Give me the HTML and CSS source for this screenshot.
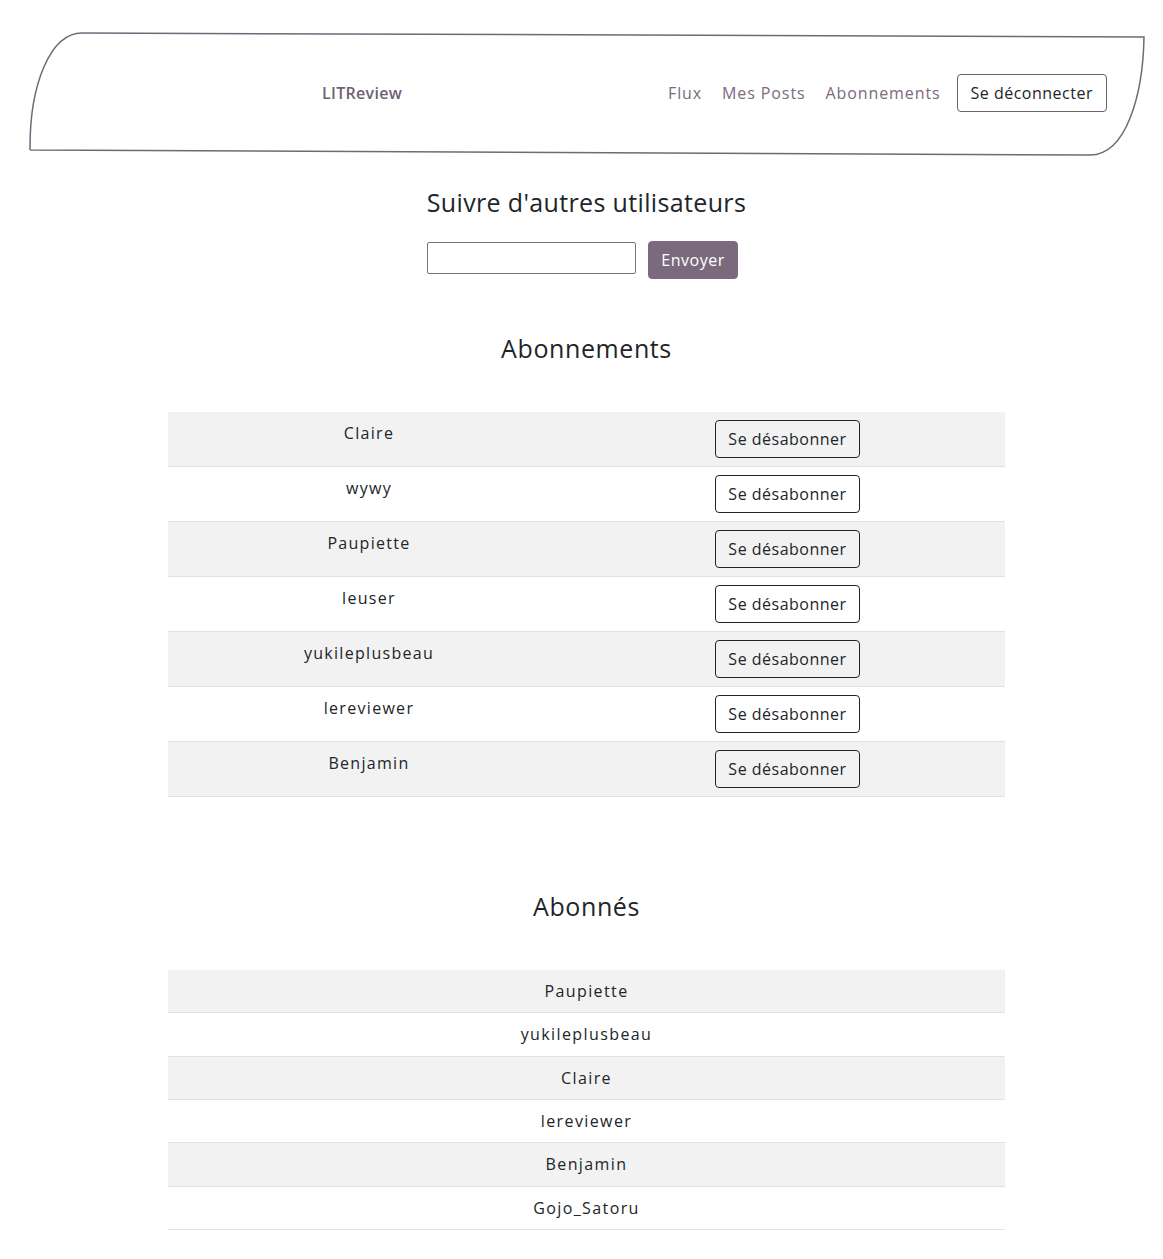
FILE: index.html
```html
<!DOCTYPE html>
<html lang="fr">
<head>
<meta charset="utf-8">
<title>LITReview - Abonnements</title>
<link rel="stylesheet" href="styles.css">
</head>
<body>
<header class="site-header">
  <svg class="header-frame" width="1114" height="122" viewBox="0 0 1114 122" aria-hidden="true">
    <path d="M0 117 L0 114 C0 52 20 0 52 0 L1114 4 C1113 60 1097 122 1060 122 L0 117" fill="none" stroke="#76667a" stroke-width="1.5"/>
  </svg>
  <a class="logo" href="#">LITReview</a>
  <nav class="nav">
    <a class="nav-link" href="#">Flux</a>
    <a class="nav-link" href="#">Mes Posts</a>
    <a class="nav-link" href="#">Abonnements</a>
    <button class="btn-outline logout" type="button">Se déconnecter</button>
  </nav>
</header>

<main class="main">
  <h3 class="title follow-title">Suivre d'autres utilisateurs</h3>
  <form class="follow-form">
    <input class="follow-input" type="text" aria-label="Nom d'utilisateur">
    <button class="btn-primary" type="button">Envoyer</button>
  </form>

  <h3 class="title subs-title">Abonnements</h3>
  <table class="table subs">
    <colgroup><col class="col-name"><col></colgroup>
    <tbody>
      <tr><td class="name">Claire</td><td class="action"><button class="btn-outline" type="button">Se désabonner</button></td></tr>
      <tr><td class="name">wywy</td><td class="action"><button class="btn-outline" type="button">Se désabonner</button></td></tr>
      <tr><td class="name">Paupiette</td><td class="action"><button class="btn-outline" type="button">Se désabonner</button></td></tr>
      <tr><td class="name">leuser</td><td class="action"><button class="btn-outline" type="button">Se désabonner</button></td></tr>
      <tr><td class="name">yukileplusbeau</td><td class="action"><button class="btn-outline" type="button">Se désabonner</button></td></tr>
      <tr><td class="name">lereviewer</td><td class="action"><button class="btn-outline" type="button">Se désabonner</button></td></tr>
      <tr><td class="name">Benjamin</td><td class="action"><button class="btn-outline" type="button">Se désabonner</button></td></tr>
    </tbody>
  </table>

  <h3 class="title followers-title">Abonnés</h3>
  <table class="table followers">
    <tbody>
      <tr><td>Paupiette</td></tr>
      <tr><td>yukileplusbeau</td></tr>
      <tr><td>Claire</td></tr>
      <tr><td>lereviewer</td></tr>
      <tr><td>Benjamin</td></tr>
      <tr><td>Gojo_Satoru</td></tr>
    </tbody>
  </table>
</main>
</body>
</html>
```

FILE: styles.css
```css
* { box-sizing: border-box; }

html, body {
  margin: 0;
  padding: 0;
  background: #fff;
}

body {
  font-family: "Open Sans", "Noto Sans", sans-serif;
  font-size: 16px;
  line-height: 24px;
  color: #212529;
  letter-spacing: 0.5px;
}

/* Header */
.site-header {
  position: relative;
  margin: 33px 19px 0 30px;
  height: 122px;
  display: flex;
  align-items: center;
  padding: 0 37px 0 292px;
}

.header-frame {
  position: absolute;
  left: 0;
  top: 0;
  overflow: visible;
  pointer-events: none;
}

.logo {
  position: relative;
  color: #6f5f73;
  font-weight: 600;
  text-decoration: none;
  letter-spacing: 0.3px;
  margin-top: -2px;
}

.nav {
  position: relative;
  margin-left: auto;
  display: flex;
  align-items: center;
  margin-top: -2px;
}

.nav-link {
  color: #7b6a7e;
  text-decoration: none;
  margin-right: 20px;
  letter-spacing: 0.9px;
}

.nav-link:last-of-type { margin-right: 16px; }

.btn-outline {
  font: inherit;
  letter-spacing: inherit;
  color: #212529;
  background: transparent;
  border: 1px solid #212529;
  border-radius: 4px;
  padding: 6px 12px;
  line-height: 24px;
  cursor: pointer;
}

.logout {
  border-color: #6d5f70;
  padding: 6px 13px;
  margin-top: 0;
}

/* Main */
.main {
  margin: 0 158px 0 168px;
  text-align: center;
}

.title {
  font-size: 25px;
  line-height: 30px;
  font-weight: 400;
  letter-spacing: 0.6px;
  margin: 0;
  color: #212529;
}

.follow-title {
  margin-top: 32px;
  letter-spacing: 0.35px;
}

.follow-form {
  margin-top: 24px;
  display: flex;
  justify-content: center;
  align-items: flex-start;
  gap: 12px;
  padding-right: 8px;
}

.follow-input {
  width: 209px;
  height: 32px;
  margin-top: 1px;
  border: 1px solid #767676;
  border-radius: 2px;
  font: inherit;
}

.btn-primary {
  font: inherit;
  letter-spacing: inherit;
  color: #fff;
  background: #7b697d;
  border: 1px solid #7b697d;
  border-radius: 4px;
  padding: 6px 12px;
  line-height: 24px;
  width: 90px;
}

.subs-title { margin-top: 54px; }
.followers-title { margin-top: 94px; }

.table {
  width: 837px;
  border-collapse: collapse;
  margin-top: 49px;
}

.table td {
  padding: 8px;
  border-bottom: 1px solid #dee2e6;
  text-align: center;
}

.table tr:nth-child(odd) td { background: #f2f2f2; }

.col-name { width: 402px; }

.subs td.name {
  vertical-align: top;
  letter-spacing: 1.3px;
  padding-top: 9px;
}
.subs td.action { vertical-align: middle; }

.followers td {
  line-height: 26.33px;
  letter-spacing: 1.4px;
}
```
